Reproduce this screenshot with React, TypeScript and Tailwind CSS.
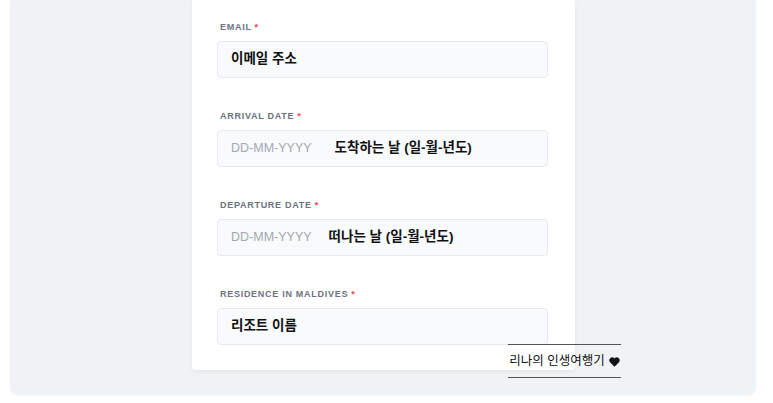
const font = { fontFamily: '"Liberation Sans", "Noto Sans CJK KR", sans-serif' }

interface FieldProps {
  label: string
  children: React.ReactNode
  last?: boolean
}

function Field({ label, children, last }: FieldProps) {
  return (
    <div className={last ? '' : 'mb-[32px]'}>
      <div className="mb-[6px] flex h-[14px] items-center gap-[3px] pl-[3px] text-[9px] font-bold uppercase tracking-[0.08em] text-[#6b7280]">
        {label}
        <span className="text-[#ef4444]">*</span>
      </div>
      <div className="flex h-[37px] items-center rounded-[4px] border border-[#e6e9ee] bg-[#f8fafc] px-[13px]">
        {children}
      </div>
    </div>
  )
}

function DateValue({ text, gap }: { text: string; gap: string }) {
  return (
    <>
      <span className="text-[12.5px] text-[#a3a8b0]">DD-MM-YYYY</span>
      <span className={`${gap} text-[13.5px] font-bold text-[#111]`}>{text}</span>
    </>
  )
}

export default function App() {
  return (
    <div className="relative h-[403px] w-[773px] bg-white" style={font}>
      <div className="ml-[10px] mr-[17px] rounded-b-[8px] bg-[#eff3f6] pb-[25px] shadow-[0_1px_2px_rgba(0,0,0,0.04)]">
        <div className="ml-[182px] w-[383px] rounded-b-[4px] bg-white pl-[25px] pr-[27px] pt-[21px] pb-[25px] shadow-[0_2px_4px_rgba(0,0,0,0.06)]">
          <Field label="Email">
            <span className="text-[13.5px] font-bold text-[#111]">이메일 주소</span>
          </Field>
          <Field label="Arrival date">
            <DateValue text="도착하는 날 (일-월-년도)" gap="ml-[23px]" />
          </Field>
          <Field label="Departure date">
            <DateValue text="떠나는 날 (일-월-년도)" gap="ml-[17px]" />
          </Field>
          <Field label="Residence in Maldives" last>
            <span className="text-[13.5px] font-bold text-[#111]">리조트 이름</span>
          </Field>
        </div>
      </div>
      <div className="absolute left-[508px] top-[344px] flex h-[34px] w-[113px] items-center justify-center gap-[4px] whitespace-nowrap border-y border-[#555] text-[12.5px] text-[#111]">
        <span>리나의 인생여행기</span>
        <svg width="11" height="10" viewBox="0 0 24 22" className="mt-[1px]">
          <path d="M12 21.5 2.6 12.1C-0.5 9 0 4.3 3.1 2 6 -0.2 9.7 0.6 12 3.4 14.3 0.6 18 -0.2 20.9 2c3.1 2.3 3.6 7 0.5 10.1Z" fill="#111" />
        </svg>
      </div>
    </div>
  )
}
